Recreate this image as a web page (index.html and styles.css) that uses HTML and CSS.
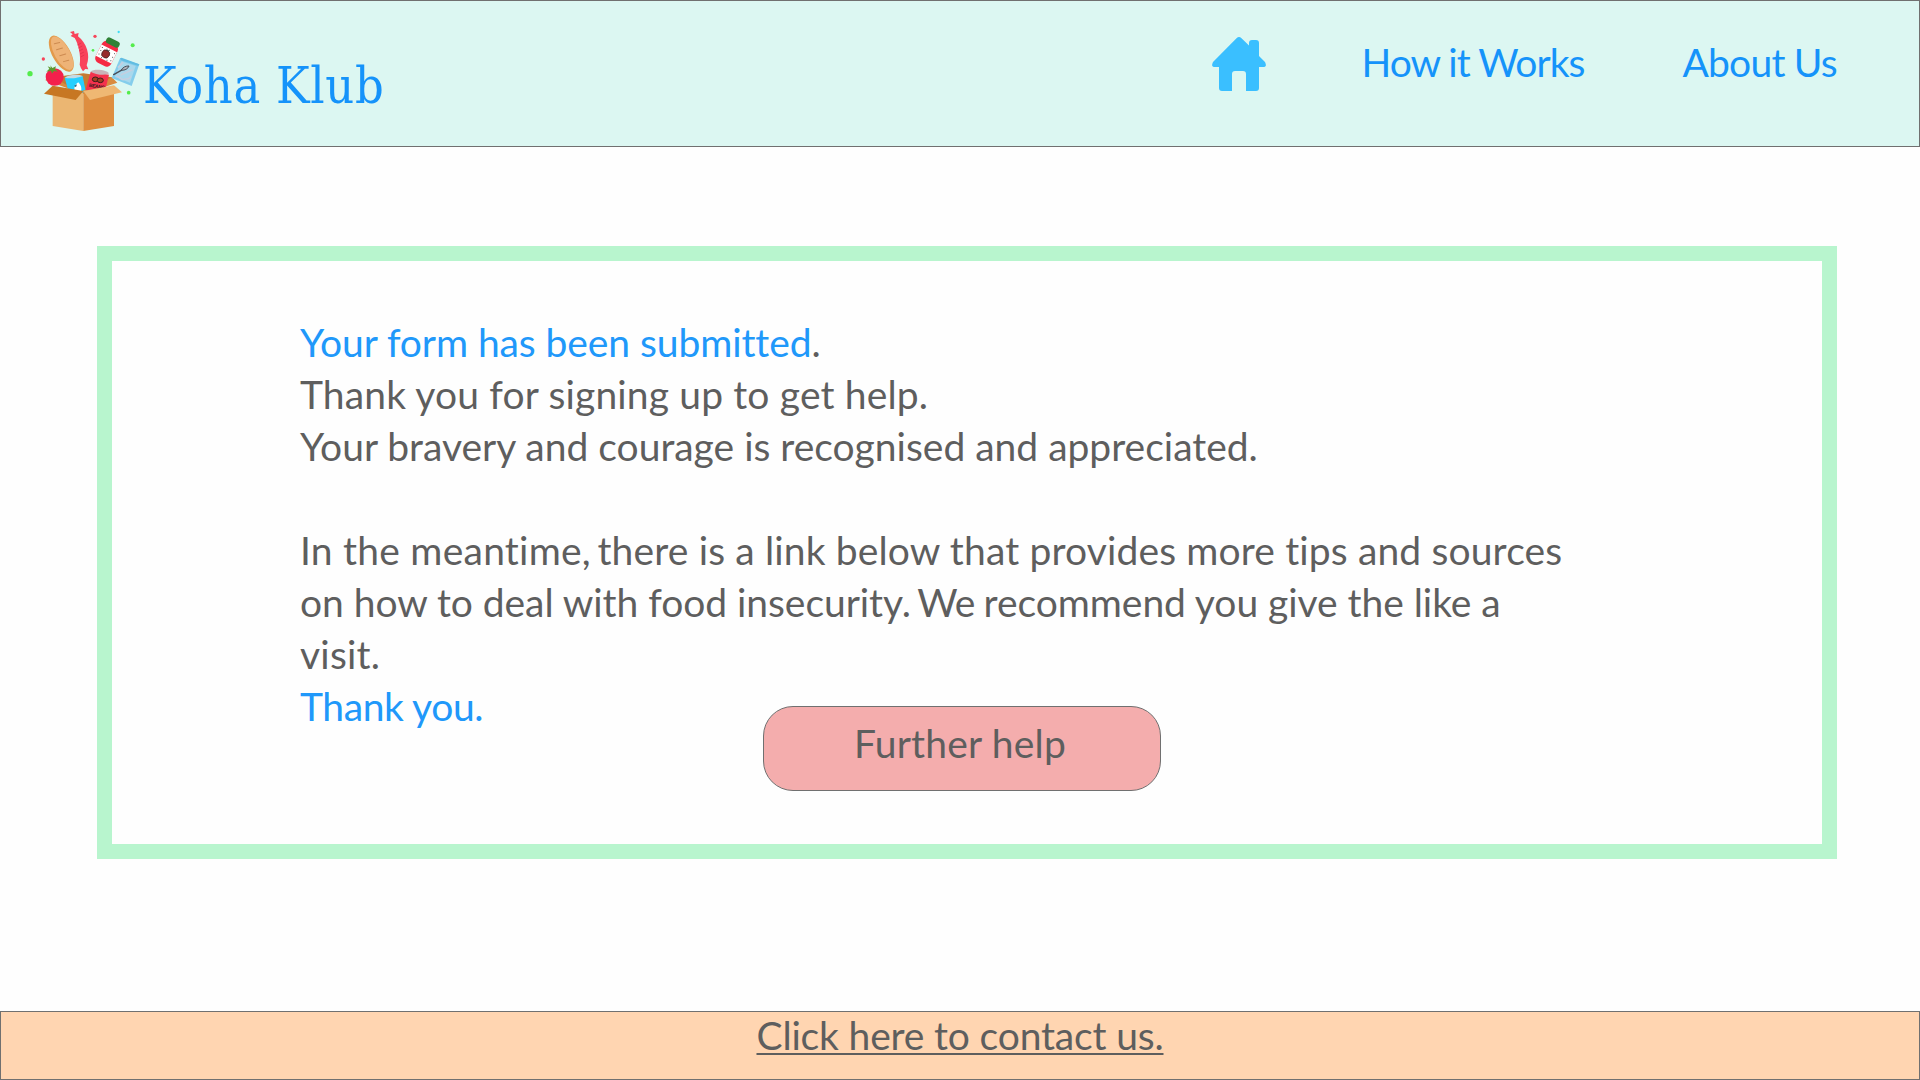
FILE: index.html
```html
<!DOCTYPE html>
<html lang="en">
<head>
<meta charset="utf-8">
<title>Koha Klub</title>
<link rel="stylesheet" href="styles.css">
</head>
<body>
<header class="header">
  <a class="brand">
    <svg class="brand-icon" viewBox="0 0 390 360" aria-hidden="true">
      <path fill="#d98b3f" d="M75 180 98 171 190 201 275 171 292 188 190 222Z"/>
      <path fill="#c47a32" d="M98 172 190 160 275 172 190 222Z"/>
      <g fill="#54ec4c"><circle cx="30" cy="161" r="8"/><circle cx="338" cy="76" r="6"/><circle cx="326" cy="218" r="5.500"/><circle cx="219" cy="91" r="4"/></g>
      <g fill="#f6455a"><circle cx="70" cy="117" r="5"/><circle cx="225" cy="49" r="5"/></g>
      <circle cx="296" cy="36" r="3.500" fill="#3fdcf5"/>
      <g transform="rotate(-29 124 101)">
        <ellipse cx="124" cy="101" rx="27" ry="60" fill="#e39a4b"/>
        <ellipse cx="127" cy="101" rx="23" ry="56" fill="#eeb377"/>
        <g stroke="#cd8b51" stroke-width="3" stroke-linecap="round"><path d="m120 65 16 4M117 84l18 4M117 104l18 4M118 125l16 4"/></g>
      </g>
      <path fill="#f9435b" d="M150 36 162 33 164 42 176 39 174 49C200 70 212 105 200 136L205 148 196 147 189 154 183 145 179 134C184 105 174 70 164 54L152 48 158 43Z"/>
      <path d="m172 75 12-6m-9 15 12-6m-10 15 12-6m-9 15 12-6m-10 15 11-6" stroke="#d92d48" stroke-width="2" fill="none"/>
      <g transform="rotate(27 262 99)">
        <rect x="235" y="66" width="52" height="72" rx="15" fill="#f52a43"/>
        <path fill="#fff" d="M235 84h52v38h-52Z"/>
        <rect x="241" y="54" width="43" height="19" rx="8" fill="#2f8236"/>
        <g fill="#343434"><circle cx="241" cy="91" r="1.500"/><circle cx="241" cy="101" r="1.500"/><circle cx="241" cy="113" r="1.500"/><circle cx="282" cy="91" r="1.500"/><circle cx="282" cy="103" r="1.500"/><circle cx="282" cy="115" r="1.500"/><circle cx="253" cy="119" r="1.500"/><circle cx="271" cy="119" r="1.500"/></g>
        <circle cx="259" cy="104" r="12" fill="#972b2d" stroke="#402326" stroke-width="2"/>
        <path d="m255 88 4 6 6-6" stroke="#343434" stroke-width="2" fill="none"/>
      </g>
      <path fill="#84cdec" d="m300 115 58 18-23 65-60-24Z"/>
      <path fill="#62bde2" d="m300 115 5-2 53 20-3 5-52-17Z"/>
      <path fill="#a9d8ec" d="m304 124 43 14-17 50-46-18Z"/>
      <path stroke="#c4cfe0" stroke-width="5" fill="none" d="m294 143 15-17M288 169c14-2 12 14 25 9s12 4 19-9M302 165l35-16"/>
      <path stroke="#484d57" stroke-width="4" stroke-linecap="round" d="m281 164 28-16"/>
      <path fill="#aeb4bd" stroke="#484d57" stroke-width="3" d="M304 150c4-8 14-13 23-12-3 8-12 14-23 12Z"/>
      <ellipse cx="104" cy="171" rx="27" ry="26" fill="#f4204c"/>
      <path fill="#5d982f" d="m91 136 6 8 11-5-3 9 9 7-12-2-6 8-3-9-14 3 9-9-5-7 10 4Z"/>
      <path fill="#27cfff" d="m134 173 54-5 10 50-52-2Z"/>
      <path fill="#c2dbe5" d="M134 173c9-8 39-13 54-5-9 5-38 10-54 5Z"/>
      <path fill="#fff" d="M166 216c-7-13 0-23 9-29 7 7 11 16 8 29Z"/>
      <path fill="#275773" d="m162 198 9-5-3 8Z"/>
      <path fill="#f4324d" d="m212 155 55 9-12 49-59 1Z"/>
      <path fill="#c8b3b8" d="M212 155c8-10 47-7 55 5-9 8-42 4-55-5Z"/>
      <g fill="#a34022" stroke="#3c1c1c" stroke-width="3"><ellipse cx="226" cy="178" rx="9" ry="7"/><ellipse cx="241" cy="181" rx="9" ry="7"/></g>
      <text class="can-label" x="206" y="200" transform="rotate(9 206 200)">BEANS</text>
      <path fill="#ebb672" d="M98 222 190 218V333L98 318Z"/>
      <path fill="#de8e40" d="M190 210 282 220V318L190 333Z"/>
      <path fill="#c77723" d="M98 197 190 213 167 240 72 221Z"/>
      <path fill="#efb873" d="M190 213 282 196 306 217 210 240Z"/>
    </svg>
    <span class="brand-name">Koha Klub</span>
  </a>
  <nav class="nav">
    <a class="nav-home" aria-label="Home">
      <svg class="home-icon" viewBox="0 0 54 54"><path fill="#3abfff" d="M24.500 1.200Q27 -1 29.500 1.200L37 8.500V6Q37 3 40 3H44Q47 3 47 6V19L53 25Q55.500 30 51 30H47V51Q47 54 44 54H34V37Q34 34 31 34H23Q20 34 20 37V54H10Q7 54 7 51V30H3Q-1.500 30 1 25Z"/></svg>
    </a>
    <a class="nav-link nav-how">How it Works</a>
    <a class="nav-link nav-about">About Us</a>
  </nav>
</header>
<main class="main">
  <section class="card">
    <p class="message">
      <span class="line line-1"><span class="accent">Your form has been submitted</span>.</span>
      <span class="line line-2">Thank you for signing up to get help.</span>
      <span class="line line-3">Your bravery and courage is recognised and appreciated.</span>
    </p>
    <p class="message">
      <span class="line line-4"><span class="lead">In the meantime,</span><span class="tight"> </span>there is a link below that provides more tips and sources</span>
      <span class="line line-5">on how to deal with food insecurity.<span class="tight"> </span><span class="snug">We </span>recommend you give the like a</span>
      <span class="line line-6">visit.</span>
      <span class="line line-7 accent">Thank you.</span>
    </p>
    <a class="button">Further help</a>
  </section>
</main>
<footer class="footer"><a class="contact">Click here to contact us.</a></footer>
</body>
</html>
```
FILE: styles.css
```css
* { box-sizing: border-box; }
body {
  margin: 0;
  height: 1080px;
  display: flex;
  flex-direction: column;
  background: #fefefe;
  color: #5e5e5e;
  font-family: Lato, "Noto Sans", sans-serif;
  font-size: 39px;
  line-height: 52px;
  font-variant-ligatures: none;
}
.header {
  height: 147px;
  flex: none;
  display: flex;
  justify-content: space-between;
  align-items: flex-start;
  padding: 19px 82px 0 19px;
  background: #dcf7f2;
  border: 1px solid #707070;
}
.brand { display: flex; align-items: flex-start; }
.brand-icon { width: 130px; height: 120px; flex: none; }
.can-label { font: bold 15px "Liberation Sans", sans-serif; fill: #3c1c1c; letter-spacing: -1px; }
.brand-name {
  margin: 36px 0 0 -7px;
  color: #1593fa;
  font-family: "DejaVu Serif Condensed", "DejaVu Serif", serif;
  font-size: 50px;
  line-height: 60px;
  letter-spacing: 0.7px;
}
.nav { display: flex; align-items: flex-start; padding-top: 16px; }
.nav-home { display: flex; padding-top: 1px; margin-right: 96px; }
.home-icon { width: 54px; height: 54px; }
.nav-link { color: #1593fa; white-space: nowrap; }
.nav-how { margin-right: 98px; letter-spacing: -1px; }
.nav-about { letter-spacing: -0.75px; }
.main { flex: 1; padding: 99px 83px 0 97px; }
.card {
  height: 613px;
  padding: 55px 188px 0;
  border: 15px solid #b8f5ce;
}
.message { margin: 0 0 52px; }
.message + .message { margin-bottom: 0; }
.line { display: block; white-space: nowrap; }
.line-1 { letter-spacing: -0.08px; }
.line-2 { letter-spacing: 0.15px; }
.line-3 { letter-spacing: -0.01px; }
.line-4 { letter-spacing: 0.14px; }
.lead { letter-spacing: 0.24px; }
.tight { word-spacing: -3.6px; }
.line-5 { letter-spacing: -0.05px; }
.snug { letter-spacing: -0.8px; }
.line-6 { letter-spacing: 0.2px; }
.line-7 { letter-spacing: -0.4px; }
.accent { color: #2098fa; }
.button {
  display: block;
  width: 398px;
  height: 85px;
  margin: -26px 0 0 463px;
  padding: 10px 4px 0 0;
  position: relative;
  border: 1px solid #707070;
  border-radius: 30px;
  background: #f4adad;
  text-align: center;
  letter-spacing: 0.2px;
}
.footer {
  height: 69px;
  flex: none;
  background: #ffd5b1;
  border: 1px solid #707070;
  text-align: center;
  line-height: 47px;
}
.contact {
  letter-spacing: -0.16px;
  text-decoration: underline;
  text-decoration-thickness: 2px;
  text-underline-offset: 3px;
  text-decoration-skip-ink: none;
}
```
